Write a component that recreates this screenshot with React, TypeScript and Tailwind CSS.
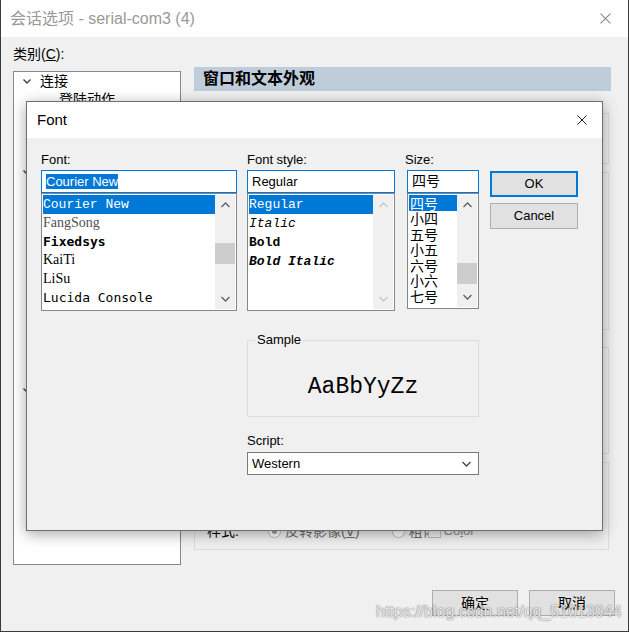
const ui = "font-['Liberation_Sans','Noto_Sans_CJK_SC',sans-serif]";
const mono = "font-['Liberation_Mono','Courier_New',monospace]";

function Chev({ dir, color = "#606060" }: { dir: "up" | "down"; color?: string }) {
  return (
    <svg width="9" height="6" viewBox="0 0 9 6">
      <path
        d={dir === "up" ? "M0.5 5 L4.5 1 L8.5 5" : "M0.5 1 L4.5 5 L8.5 1"}
        fill="none"
        stroke={color}
        strokeWidth="1.3"
      />
    </svg>
  );
}

function XIcon({ size, color }: { size: number; color: string }) {
  return (
    <svg width={size} height={size} viewBox="0 0 10 10">
      <path d="M0.5 0.5 L9.5 9.5 M9.5 0.5 L0.5 9.5" stroke={color} strokeWidth="1" />
    </svg>
  );
}

function ScrollBar({ thumb, disabled }: { thumb?: string; disabled?: boolean }) {
  const c = disabled ? "#c6c6c6" : "#606060";
  return (
    <div className="w-[20px] bg-[#f0f0f0] flex flex-col">
      <div className="h-[20px] flex items-center justify-center">
        <Chev dir="up" color={c} />
      </div>
      <div className="flex-1">{thumb && <div className={`h-[21px] bg-[#cdcdcd] ${thumb}`} />}</div>
      <div className="h-[20px] flex items-center justify-center">
        <Chev dir="down" color={c} />
      </div>
    </div>
  );
}

// only the first rows of the tree show; the rest sit under the Font dialog
const tree: { t: string; l: number; c?: boolean }[] = [
  { t: "连接", l: 0, c: true },
  { t: "登陆动作", l: 1 },
  { t: "", l: 1 },
  { t: "", l: 1 },
  { t: "", l: 1 },
  { t: "", l: 0, c: true },
  { t: "", l: 1 },
  { t: "", l: 2 },
  { t: "", l: 2 },
  { t: "", l: 2 },
  { t: "", l: 2 },
  { t: "", l: 1 },
  { t: "", l: 2 },
  { t: "", l: 1 },
  { t: "", l: 1 },
  { t: "", l: 1 },
  { t: "", l: 1 },
  { t: "", l: 0, c: true },
];

const fonts = [
  { t: "FangSong", cls: "font-['Liberation_Serif',serif] text-[14px] text-[#505050]" },
  { t: "Fixedsys", cls: "font-['DejaVu_Sans_Mono',monospace] text-[13px] font-bold" },
  { t: "KaiTi", cls: "font-['Liberation_Serif',serif] text-[14px]" },
  { t: "LiSu", cls: "font-['Liberation_Serif',serif] text-[14px]" },
  { t: "Lucida Console", cls: "font-['DejaVu_Sans_Mono',monospace] text-[13px]" },
];

const sizes = ["小四", "五号", "小五", "六号", "小六", "七号"];

export default function App() {
  return (
    <div
      className={`relative w-[629px] h-[632px] overflow-hidden bg-[#f0f0f0] border-x border-b border-[#3b3b3b] text-black ${ui}`}
    >
      {/* title bar */}
      <div className="h-[37px] bg-white flex items-center justify-between pl-[9px] pr-[17px]">
        <span className="text-[16px] text-[#999]">会话选项 - serial-com3 (4)</span>
        <XIcon size={11} color="#8a8a8a" />
      </div>

      <div className="pl-[12px] pr-[13px] pt-[8px]">
        <div className="text-[14px] leading-[18px]">
          类别(<span className="underline">C</span>):
        </div>

        <div className="flex items-start mt-[4px]">
          {/* category tree */}
          <div className="mt-[4px] w-[168px] h-[494px] border border-[#828790] bg-white text-[14px] overflow-hidden">
            {tree.map((r, i) => (
              <div
                key={i}
                className={`h-[18.2px] flex items-center ${
                  r.l === 0 ? "pl-[9px]" : r.l === 1 ? "pl-[45px]" : "pl-[63px]"
                }`}
              >
                {r.c && (
                  <span className="w-[17px] flex">
                    <svg width="8" height="5" viewBox="0 0 8 5">
                      <path d="M0.5 0.5 L4 4 L7.5 0.5" fill="none" stroke="#404040" strokeWidth="1.4" />
                    </svg>
                  </span>
                )}
                <span className="whitespace-nowrap">{r.t}</span>
              </div>
            ))}
          </div>

          {/* right panel */}
          <div className="ml-[13px] w-[417px]">
            <div className="h-[24px] bg-[#bfcddb] flex items-center pl-[9px] text-[16px] font-bold">
              窗口和文本外观
            </div>
            <div className="mt-[22px] w-[415px] h-[51px] border border-[#dcdcdc]" />
            <div className="mt-[8px] w-[415px] h-[158px] border border-[#dcdcdc]" />
            <div className="mt-[17px] w-[415px] h-[107px] border border-[#dcdcdc]" />
            <div className="mt-[8px] w-[415px] h-[88px] border border-[#dcdcdc] flex items-end pb-[10px] pl-[12px] text-[14px] leading-[16px]">
              <span>样式:</span>
              <span className="ml-[29px] mb-[1px] w-[13px] h-[13px] rounded-full border border-[#bcbcbc] bg-white flex items-center justify-center">
                <span className="w-[5px] h-[5px] rounded-full bg-[#a0a0a0]" />
              </span>
              <span className="ml-[4px] text-[#6d6d6d]">
                反转影像(<span className="underline">V</span>)
              </span>
              <span className="ml-[32px] mb-[1px] w-[13px] h-[13px] rounded-full border border-[#bcbcbc] bg-white" />
              <span className="ml-[4px] text-[#6d6d6d]">粗体</span>
              <span className="-ml-[9px] mb-[1px] relative w-[13px] h-[13px] border border-[#bcbcbc] bg-[#f0f0f0]" />
              <span className="ml-[3px] text-[13px] text-[#8a8a8a]">
                Co<span className="underline">l</span>or
              </span>
            </div>
          </div>
        </div>

        <div className="flex justify-end gap-[11px] mt-[25px]">
          <button className="w-[86px] h-[26px] border border-[#adadad] bg-[#e1e1e1] text-[14px]">确定</button>
          <button className="w-[86px] h-[26px] border border-[#adadad] bg-[#e1e1e1] text-[14px]">取消</button>
        </div>
      </div>

      {/* Font dialog */}
      <div className="absolute left-[25px] top-[101px] w-[577px] h-[430px] border border-[#6e6e6e] bg-[#f0f0f0] shadow-[0_3px_14px_rgba(0,0,0,0.35)]">
        <div className="h-[36px] bg-white flex items-center justify-between pl-[10px] pr-[15px]">
          <span className="text-[15px]">Font</span>
          <XIcon size={10} color="#1a1a1a" />
        </div>

        <div className="flex items-start pl-[14px] pt-[14px] text-[13px]">
          {/* Font column */}
          <div className="w-[196px]">
            <div className="h-[16px] leading-[16px] mb-[2px]">Font:</div>
            <div className="h-[23px] border border-[#0078d7] bg-white flex items-center pl-[4px]">
              <span className="bg-[#0078d7] text-white leading-[15px]">Courier New</span>
            </div>
            <div className="h-[118px] border border-[#828790] bg-white p-[1px] flex">
              <div className="flex-1 overflow-hidden">
                <div className={`h-[19px] leading-[19px] bg-[#0078d7] text-white text-[13px] ${mono}`}>Courier New</div>
                {fonts.map((f) => (
                  <div key={f.t} className={`h-[18.7px] leading-[18.7px] whitespace-nowrap ${f.cls}`}>
                    {f.t}
                  </div>
                ))}
              </div>
              <ScrollBar thumb="mt-[28px]" />
            </div>
          </div>

          {/* Style / Size / Sample / Script */}
          <div className="ml-[10px] w-[232px]">
            <div className="flex items-start">
              <div className="w-[148px]">
                <div className="h-[16px] leading-[16px] mb-[2px]">Font style:</div>
                <div className="h-[23px] border border-[#0078d7] bg-white flex items-center pl-[4px]">Regular</div>
                <div className="h-[118px] border border-[#828790] bg-white p-[1px] flex">
                  <div className={`flex-1 text-[13px] ${mono}`}>
                    <div className="h-[19px] leading-[19px] bg-[#0078d7] text-white">Regular</div>
                    <div className="h-[19px] leading-[19px] italic">Italic</div>
                    <div className="h-[19px] leading-[19px] font-bold">Bold</div>
                    <div className="h-[19px] leading-[19px] font-bold italic">Bold Italic</div>
                  </div>
                  <ScrollBar disabled />
                </div>
              </div>
              <div className="ml-[12px] w-[72px]">
                <div className="h-[16px] leading-[16px] mb-[2px] -ml-[2px]">Size:</div>
                <div className="h-[23px] border border-[#0078d7] bg-white flex items-center pl-[4px] text-[14px]">四号</div>
                <div className="h-[116px] border border-[#828790] bg-white p-[1px] flex">
                  <div className="flex-1 text-[14px] font-['Noto_Sans_CJK_SC',sans-serif]">
                    <div className="h-[16px] leading-[16px] bg-[#0078d7] text-white pl-[1px]">四号</div>
                    {sizes.map((s) => (
                      <div key={s} className="h-[15.6px] leading-[15.6px] pl-[1px]">
                        {s}
                      </div>
                    ))}
                  </div>
                  <ScrollBar thumb="mt-[48px]" />
                </div>
              </div>
            </div>

            <fieldset className="mt-[21px] h-[85px] border border-[#dcdcdc]">
              <legend className="ml-[7px] px-[2px] leading-[16px]">Sample</legend>
              <div className={`h-[67px] pt-[12px] flex items-center justify-center text-[23px] ${mono}`}>AaBbYyZz</div>
            </fieldset>

            <div className="mt-[16px] h-[16px] leading-[16px]">Script:</div>
            <div className="mt-[3px] h-[23px] border border-[#7a7a7a] bg-white flex items-center justify-between pl-[4px] pr-[7px]">
              <span>Western</span>
              <Chev dir="down" color="#444" />
            </div>
          </div>

          {/* Buttons */}
          <div className="ml-[11px] w-[88px] pt-[19px]">
            <button className="w-[88px] h-[26px] border-2 border-[#0078d7] bg-[#e1e1e1] text-[13px]">OK</button>
            <button className="mt-[6px] w-[88px] h-[26px] border border-[#adadad] bg-[#e1e1e1] text-[13px]">Cancel</button>
          </div>
        </div>
      </div>

      {/* watermark */}
      <div className="absolute left-[375px] top-[602px] text-[16px] leading-[20px] text-white/85 font-['Liberation_Sans',sans-serif] [text-shadow:0_0_1px_rgba(0,0,0,0.6),0_0_2px_rgba(0,0,0,0.25)]">
        https://blog.csdn.net/qq_51013944
      </div>
    </div>
  );
}
